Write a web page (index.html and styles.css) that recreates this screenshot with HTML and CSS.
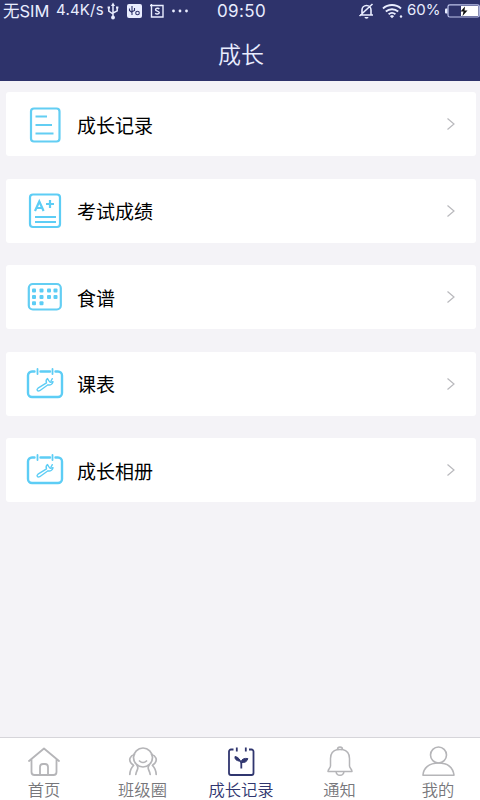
FILE: index.html
```html
<!DOCTYPE html>
<html lang="zh-CN">
<head>
<meta charset="utf-8">
<title>成长</title>
<link rel="stylesheet" href="styles.css">
</head>
<body>
<svg class="defs" width="0" height="0">
  <symbol id="arrow" viewBox="0 0 10 14"><path d="M1.5 1.5 8 7 1.5 12.5" fill="none" stroke="#b9b9bd" stroke-width="1.2"/></symbol>
  <symbol id="tool-calendar" viewBox="0 0 38 34">
    <g fill="none" stroke="#5dcdf5" stroke-width="2.4" stroke-linecap="round">
      <path d="M8.500 4.500H6a4 4 0 0 0-4 4V26a4 4 0 0 0 4 4h26a4 4 0 0 0 4-4V8.500a4 4 0 0 0-4-4h-2.500M14.500 4.500h9.500"/>
      <path d="M11.500 2v5M26.500 2v5" stroke-width="1.800"/>
      <path d="M21.500 11.500c-1.500 1.200-1.700 2.700-1 4.300l-8.500 5.400c-2 1.600-.5 3.600 1.700 2.500l8.300-5.900c2.300.7 4.500-.5 5-3l-2.800.5-1.500-1.700z" stroke-width="1.400" stroke-linejoin="round"/>
      <path d="M25 14l1.300-2.300" stroke-width="1.400"/>
    </g>
  </symbol>
</svg>
<div class="screen">
  <header class="header">
    <div class="status">
      <div class="status-left">
        <span class="carrier">无SIM</span><span class="speed">4.4K/s</span>
        <svg class="usb" width="12" height="18" viewBox="0 0 12 18" fill="none" stroke="#e9edff" stroke-width="1.500"><path d="M6 2.500V15M1.800 6v3.200L6 12M10.200 6v2.800L6 11"/><path d="M6 .5 8 4H4z" fill="#e9edff" stroke="none"/><circle cx="6" cy="15.500" r="1.900" fill="#e9edff" stroke="none"/><path d="M.6 5.500h2.400M9 5.500h2.400" stroke-width="2"/></svg>
        <svg class="debug" width="15" height="14" viewBox="0 0 15 14"><rect width="15" height="14" rx="2" fill="#e9edff"/><g fill="none" stroke="#2e336b" stroke-width="1.100"><path d="M5 2v9M2.500 4.500v2L5 8.500M7.500 4v2.500L5 7.800"/><circle cx="10.500" cy="9" r="1.800"/></g></svg>
        <svg class="square-s" width="14" height="14" viewBox="0 0 14 14" fill="none" stroke="#e9edff" stroke-width="1.400"><path d="M0 1.500h13v11.500H1.500V0"/><path d="M9.300 5C8.500 3.800 5.500 4 5.500 5.700c0 1.800 3.800 1 3.800 2.900 0 1.700-3.200 1.900-4 .5"/></svg>
        <svg class="dots" width="18" height="4" viewBox="0 0 18 4" fill="#e9edff"><circle cx="1.500" cy="2" r="1.400"/><circle cx="8" cy="2" r="1.400"/><circle cx="14.500" cy="2" r="1.400"/></svg>
      </div>
      <span class="clock">09:50</span>
      <div class="status-right">
        <svg class="mute" width="16" height="16" viewBox="0 0 16 16" fill="none" stroke="#e9edff" stroke-width="1.600"><path d="M2 12h13M4 12V7a4.500 4.500 0 0 1 9 0V12M1.500 13 14.500 1"/><path d="M6.500 14a2 1.700 0 0 0 4 0z" fill="#e9edff" stroke="none"/></svg>
        <svg class="wifi" width="22" height="16" viewBox="0 0 22 16" fill="none" stroke="#e9edff" stroke-width="1.900"><path d="M1 5.500a13.500 13.500 0 0 1 18 0M3.800 8.500a9.500 9.500 0 0 1 12.400 0M6.600 11.300a5.300 5.300 0 0 1 6.800 0"/><path d="m7.800 13 2.200-1 2.200 1-2.200 2.300z" fill="#e9edff" stroke="none"/><circle cx="19" cy="13.500" r="1.200" fill="#e9edff" stroke="none"/></svg>
        <span class="percent">60%</span>
        <svg class="battery" width="35" height="14" viewBox="0 0 35 14"><path d="M2.500 4.500H1a1 1 0 0 0-1 1v3a1 1 0 0 0 1 1h1.500z" fill="#e9edff"/><rect x="3" y=".8" width="31.300" height="12.200" rx="1.800" fill="none" stroke="#bdc3ea" stroke-width="1.200"/><path d="M16 2h17.300v10H16z" fill="#fff"/><path d="m20 2.500-4.500 5h3l-1 4.500 5-5.500h-3z" fill="#111"/></svg>
      </div>
    </div>
    <h1 class="title">成长</h1>
  </header>

  <main class="list">
    <a class="card">
      <svg class="icon icon-record" width="38" height="38" viewBox="0 0 38 38" fill="none" stroke="#63cef3" stroke-width="2.200"><rect x="5" y="2.500" width="28.500" height="33" rx="3"/><path d="M9.500 10.500H21M9.500 19H26M9.500 27.500H27.500" stroke-width="2"/></svg>
      <span class="label">成长记录</span><svg class="arrow" width="10" height="14"><use href="#arrow"/></svg>
    </a>
    <a class="card">
      <svg class="icon" width="38" height="38" viewBox="0 0 38 38" fill="none" stroke="#5dcdf5" stroke-width="2.200"><rect x="4" y="2.500" width="30" height="32.500" rx="3"/><path d="M9 19 13.300 9.500 17.600 19M10.500 16H16M20 12h8M24 8v8M9 25h21M9 30h21"/></svg>
      <span class="label">考试成绩</span><svg class="arrow" width="10" height="14"><use href="#arrow"/></svg>
    </a>
    <a class="card">
      <svg class="icon" width="38" height="38" viewBox="0 0 38 38"><rect x="2.800" y="6" width="32" height="25.500" rx="4" fill="none" stroke="#63cef3" stroke-width="2.200"/><g fill="#5dcdf5"><rect x="6" y="10.500" width="4" height="4" rx="1"/><rect x="13.500" y="10.500" width="4" height="4" rx="1"/><rect x="21" y="10.500" width="4" height="4" rx="1"/><rect x="27.500" y="10.500" width="4" height="4" rx="1"/><rect x="6" y="17" width="4" height="4" rx="1"/><rect x="13.500" y="17" width="4" height="4" rx="1"/><rect x="21" y="17" width="4" height="4" rx="1"/><rect x="27.500" y="17" width="4" height="4" rx="1"/><rect x="6" y="23.300" width="4" height="4" rx="1"/><rect x="13.500" y="23.300" width="4" height="4" rx="1"/></g></svg>
      <span class="label">食谱</span><svg class="arrow" width="10" height="14"><use href="#arrow"/></svg>
    </a>
    <a class="card">
      <svg class="icon" width="38" height="34"><use href="#tool-calendar"/></svg>
      <span class="label">课表</span><svg class="arrow" width="10" height="14"><use href="#arrow"/></svg>
    </a>
    <a class="card">
      <svg class="icon" width="38" height="34"><use href="#tool-calendar"/></svg>
      <span class="label">成长相册</span><svg class="arrow" width="10" height="14"><use href="#arrow"/></svg>
    </a>
  </main>

  <nav class="tabs">
    <a class="tab">
      <svg width="36" height="34" viewBox="0 0 36 34" fill="none" stroke="#b5b5b8" stroke-width="1.800" stroke-linejoin="round" stroke-linecap="round"><path d="M3 15 18 2.500 33 15M5.500 13.500V26a3 3 0 0 0 3 3h19a3 3 0 0 0 3-3V13.500"/><path d="M14 29V21a3 3 0 0 1 3-3h2a3 3 0 0 1 3 3v8"/></svg>
      <span>首页</span>
    </a>
    <a class="tab">
      <svg width="36" height="34" viewBox="0 0 36 34" fill="none" stroke="#b5b5b8" stroke-width="1.700" stroke-linecap="round"><circle cx="18" cy="11.500" r="9.500"/><path d="M14.500 15c2 2 5 2 7 0M9.500 8.500C5 9.500 3.500 14 6 17c1 1.200 2 1.500 2.500 2.500C6 22 5 24 4.800 28.500M26.500 8.500c4.500 1 6 5.500 3.500 8.500-1 1.200-2 1.500-2.500 2.500C30 22 31 24 31.200 28.500M12 19.500c2.500 3-.5 4-1.200 9M24 19.500c-2.500 3 .5 4 1.200 9"/></svg>
      <span>班级圈</span>
    </a>
    <a class="tab active">
      <svg width="36" height="34" viewBox="0 0 36 34" fill="none" stroke="#30366f" stroke-width="1.800"><path d="M10.500 3.500H8a2 2 0 0 0-2 2V27a2 2 0 0 0 2 2h20.500a2 2 0 0 0 2-2V5.500a2 2 0 0 0-2-2h-2.500M13.800 1.500v4M22.800 1.500v4"/><path d="M18.300 22.500V16"/><path d="M18.300 17.500C17.500 14 15.500 11 12 10.500c-.5 3.500 2.500 4.500 6.300 5 .5-2.500 3-3.500 6.500-3-.5 3-3 4.500-6.500 4z" fill="#30366f" stroke-width="1"/></svg>
      <span>成长记录</span>
    </a>
    <a class="tab">
      <svg width="36" height="34" viewBox="0 0 36 34" fill="none" stroke="#b5b5b8" stroke-width="1.500" stroke-linejoin="round"><path d="M15.500 3.500a2.500 2.500 0 0 1 5 0c4.500 1 7 4.500 7 9V20c0 2 2.500 3 2.500 5.500H6c0-2.500 2.500-3.500 2.500-5.500v-7.500c0-4.500 2.500-8 7-9zM15.500 3.800c1.500-.5 3.500-.5 5 0M14 25.500c.5 5 7.500 5 8 0"/></svg>
      <span>通知</span>
    </a>
    <a class="tab">
      <svg width="36" height="34" viewBox="0 0 36 34" fill="none" stroke="#b5b5b8" stroke-width="1.600" stroke-linejoin="round"><circle cx="18.500" cy="9" r="8"/><path d="M3 29C3.500 22 9 17 18.500 17S33 22 34 29.200H3z"/></svg>
      <span>我的</span>
    </a>
  </nav>
</div>
</body>
</html>
```

FILE: styles.css
```css
* { box-sizing: border-box; }
body {
  margin: 0;
  font-family: "Noto Sans CJK SC", sans-serif;
  background: #f4f3f7;
}
.defs { display: block; }
.screen {
  width: 480px;
  height: 800px;
  display: flex;
  flex-direction: column;
  overflow: hidden;
}
.header {
  height: 81px;
  flex: none;
  background: #2e336b;
  color: #e9edff;
}
.status {
  height: 21px;
  display: grid;
  grid-template-columns: 217px 1fr 122px;
  align-items: center;
  font-family: Inter, "Noto Sans CJK SC", sans-serif;
  font-size: 15px;
  line-height: 20px;
  white-space: nowrap;
}
.status-left, .status-right { display: flex; align-items: center; height: 21px; }
.status-left { padding-left: 3px; }
.carrier { width: 53px; font-size: 16.5px; }
.speed { width: 51px; letter-spacing: .2px; padding-bottom: 1px; }
.usb { margin-left: 0; }
.debug { margin-left: 8px; }
.square-s { margin-left: 8px; }
.dots { margin-left: 8px; }
.clock { font-size: 17px; letter-spacing: .4px; }
.wifi { margin-left: 8px; }
.percent { width: 38px; margin-left: 3px; padding-bottom: 1px; }
.battery { flex: none; }
.title {
  margin: 15px 0 0;
  padding-left: 2px;
  font-size: 23px;
  font-weight: 350;
  line-height: 34px;
  text-align: center;
}
.list {
  flex: 1;
  display: flex;
  flex-direction: column;
  gap: 22.500px;
  padding: 11.200px 4px 0 6px;
}
.card {
  height: 64px;
  flex: none;
  display: flex;
  align-items: center;
  padding: 0 20px;
  border-radius: 3px;
  background: #fff;
  color: #000;
}
.icon { flex: none; }
.icon-record { margin-top: 1px; }
.label { flex: 1; margin-left: 13px; padding-top: 1px; font-size: 19px; line-height: 28px; }
.tabs {
  height: 63px;
  flex: none;
  display: grid;
  grid-template-columns: 88px 109px 88px 109px 88px;
  border-top: 1px solid #d6d5da;
  background: #fff;
}
.tab {
  display: flex;
  flex-direction: column;
  align-items: center;
  padding-top: 8px;
  color: #77777b;
  font-size: 16.300px;
  font-weight: 350;
  line-height: 19px;
  white-space: nowrap;
}
.tab svg { flex: none; }
.active { color: #30366f; }
```
